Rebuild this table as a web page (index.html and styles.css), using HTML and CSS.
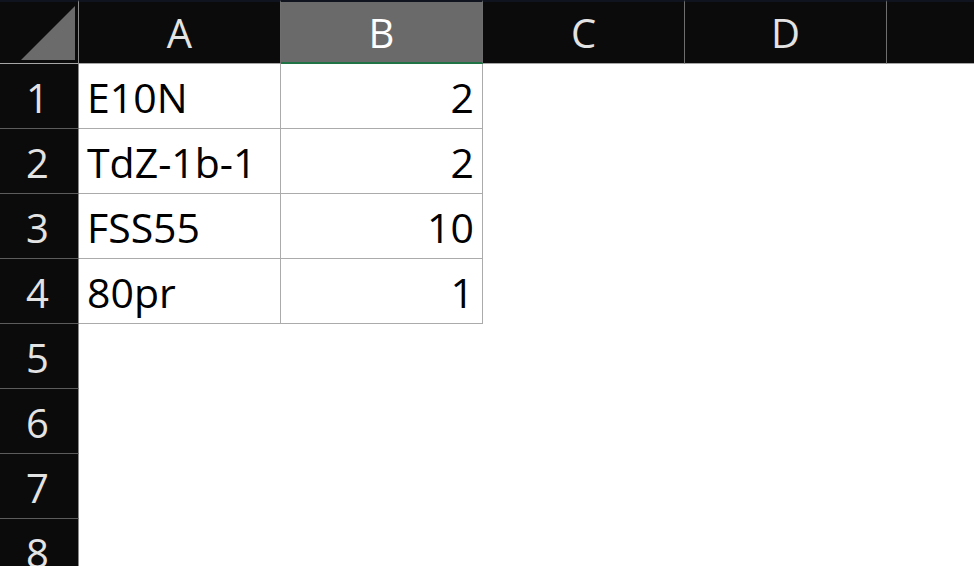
FILE: index.html
```html
<!DOCTYPE html>
<html>
<head>
<meta charset="utf-8">
<link rel="stylesheet" href="styles.css">
</head>
<body>
<div class="sheet">
  <div class="hd corner"><svg class="tri" width="54" height="54" viewBox="0 0 54 54"><polygon points="54,0 54,54 0,54" fill="#6b6b6b"/></svg></div>
  <div class="hd col">A</div>
  <div class="hd col sel">B</div>
  <div class="hd col">C</div>
  <div class="hd col">D</div>
  <div class="hd col last"></div>

  <div class="rh">1</div><div class="cell">E10N</div><div class="cell num">2</div>
  <div class="rh">2</div><div class="cell">TdZ-1b-1</div><div class="cell num">2</div>
  <div class="rh">3</div><div class="cell">FSS55</div><div class="cell num">10</div>
  <div class="rh">4</div><div class="cell">80pr</div><div class="cell num">1</div>
  <div class="rh">5</div>
  <div class="rh">6</div>
  <div class="rh">7</div>
  <div class="rh">8</div>
</div>
</body>
</html>
```
FILE: styles.css
```css
html, body {
  margin: 0;
  padding: 0;
  background: #ffffff;
  overflow: hidden;
  width: 974px;
  height: 566px;
}

.sheet {
  display: grid;
  grid-template-columns: 79px 202px 202px 202px 202px 1fr;
  grid-template-rows: 64px repeat(8, 65px);
  font-family: "Open Sans", "Liberation Sans", sans-serif;
}

.hd {
  box-sizing: border-box;
  background: #0b0b0b;
  border-top: 2px solid #10141f;
  border-right: 1px solid #6e6e6e;
  border-bottom: 1px solid #a6a6a6;
  color: #e3e3e3;
  font-size: 40px;
  display: flex;
  align-items: center;
  justify-content: center;
}

.corner {
  position: relative;
  border-right-color: #8a8a8a;
}

.tri {
  position: absolute;
  right: 3px;
  bottom: 3px;
}

.col.sel {
  background: #6a6a6a;
  color: #ffffff;
  border-bottom: 2px solid #217346;
}

.col.last {
  border-right: none;
}

.rh {
  grid-column: 1;
  box-sizing: border-box;
  background: #0b0b0b;
  border-right: 1px solid #8a8a8a;
  border-bottom: 1px solid #5c5c5c;
  color: #e3e3e3;
  font-size: 40px;
  display: flex;
  align-items: center;
  justify-content: center;
  padding: 2px 3px 0 0;
}

.cell {
  box-sizing: border-box;
  border-right: 1px solid #ababab;
  border-bottom: 1px solid #ababab;
  color: #000000;
  font-size: 41px;
  display: flex;
  align-items: center;
  padding: 2px 8px 0 8px;
  white-space: nowrap;
}

.cell.num {
  justify-content: flex-end;
}
```
